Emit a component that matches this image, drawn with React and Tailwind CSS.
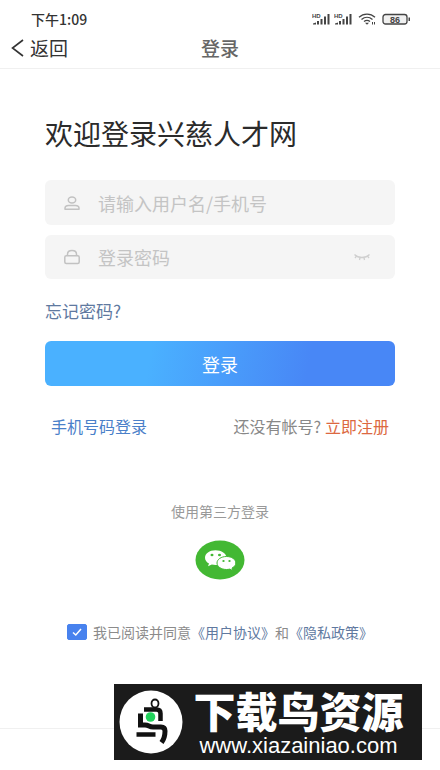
import { useState } from "react";

function Signal() {
  return (
    <svg className="h-3 w-[18px]" viewBox="0 0 18 12" fill="#444">
      <text x="0" y="4.500" fontSize="6" fontWeight="700" fontFamily="Liberation Sans, sans-serif">HD</text>
      <path d="M1 11.500V10.500l3-1v2zM5 8h2v3.500H5zM8.500 6h2v5.500h-2zM12 3.500h2v8h-2zM15.500 1h2v10.500h-2z" />
    </svg>
  );
}

function StatusBar() {
  return (
    <div className="flex h-7 items-end justify-between pl-[31px] pr-[29px] text-[#333]">
      <span className="text-sm leading-[18px] font-medium">下午1:09</span>
      <div className="flex h-[18px] items-center gap-1">
        <Signal />
        <Signal />
        <svg className="ml-0.5 h-3 w-[18px]" viewBox="0 0 18 12" fill="none" stroke="#444" strokeWidth="1.3">
          <path d="M1 4.300C5.500 0 12.500 0 17 4.300M3.500 6.600c3.300-3 7.700-3 11 0M6 8.600c2-1.700 4-1.700 6 0" />
          <path d="M7 9.700h4L9 11.700z" fill="#444" stroke="none" />
          <path d="M14.500 9v2.500M16.500 9v2.500" strokeWidth="1" />
        </svg>
        <svg className="ml-0.5 h-3 w-[29px]" viewBox="0 0 29 12">
          <rect x="1" y="1.500" width="24" height="9.500" rx="2.500" fill="#f0f0f0" stroke="#444" strokeWidth="1.300" />
          <path d="M26.500 4.500h1.500v3.500h-1.500z" fill="#444" />
          <text x="13" y="9.500" textAnchor="middle" fontSize="9" fontWeight="700" fill="#444" fontFamily="Liberation Sans, sans-serif">86</text>
        </svg>
      </div>
    </div>
  );
}

function NavBar() {
  return (
    <header className="grid h-[41px] grid-cols-3 items-center border-b border-[#f0f0f0] px-[11px] text-[#333]">
      <button type="button" className="flex items-center gap-1.5 text-[19px] leading-6">
        <svg className="h-[18px] w-[13px]" viewBox="0 0 13 18" fill="none" stroke="currentColor" strokeWidth="1.600">
          <path d="M12 1 1.500 9 12 17" />
        </svg>
        返回
      </button>
      <h1 className="text-center text-[19px] leading-6 font-medium text-[#666]">登录</h1>
    </header>
  );
}

function UserIcon() {
  return (
    <svg className="h-4 w-4 shrink-0" viewBox="0 0 16 16" fill="none" stroke="#c2c2c2" strokeWidth="1.500">
      <ellipse cx="8" cy="5" rx="3.700" ry="3" />
      <path d="M1 14.200v-1c0-1.700 1.500-2.800 3.500-2.800h7c2 0 3.500 1.100 3.500 2.800v1z" strokeLinejoin="round" />
    </svg>
  );
}

function LockIcon() {
  return (
    <svg className="h-4 w-4 shrink-0" viewBox="0 0 16 16" fill="none" stroke="#c2c2c2" strokeWidth="1.500">
      <rect x="0.800" y="6.800" width="14.400" height="7.700" rx="1.500" />
      <path d="M3.500 6.500V5.300C3.500 3 5.500 1.600 8 1.600s4.500 1.400 4.500 3.700v1.200" />
    </svg>
  );
}

function WechatIcon() {
  return (
    <svg className="h-10 w-[50px]" viewBox="0 0 50 40">
      <ellipse cx="25" cy="20" rx="24.500" ry="19.500" fill="#43b833" />
      <path d="M20.500 10.200c-6 0-10.500 3.300-10.500 7.500 0 2.500 1.500 4.500 4 5.900l-1 2.600 3.800-1.700c1.200.3 2.400.5 3.700.5 6 0 11-3.200 11-7.300s-5-7.500-11-7.500z" fill="#fff" />
      <path d="M31.500 16.500c-5.300 0-9.500 2.900-9.500 6.500s4.200 6.500 9.500 6.500c1.200 0 2.300-.2 3.300-.4l3 1.500-.8-2.500c2.300-1.200 3.800-3 3.800-5.100 0-3.600-4-6.500-9.300-6.500z" fill="#fff" stroke="#43b833" strokeWidth="1" />
      <g fill="#43b833">
        <ellipse cx="17" cy="15" rx="1.500" ry="1.200" />
        <ellipse cx="24.500" cy="15" rx="1.500" ry="1.200" />
        <ellipse cx="28.500" cy="21" rx="1.200" ry="1" />
        <ellipse cx="34.500" cy="21" rx="1.200" ry="1" />
      </g>
    </svg>
  );
}

function SiteBanner() {
  return (
    <div className="absolute right-[18px] bottom-2.5 flex h-[76px] w-[308px] items-center gap-1 bg-[#1b1b1b] pl-[5px] text-white">
      <svg className="h-16 w-16 shrink-0" viewBox="0 0 64 64" fill="none">
        <circle cx="32" cy="32" r="31.500" fill="#fff" />
        <ellipse cx="36" cy="13.500" rx="3.500" ry="4" stroke="#111" strokeWidth="1.800" />
        <path d="M25 19.500h12.500q4 0 4 4V31" stroke="#111" strokeWidth="4.500" />
        <path d="M21.500 23.500V35h4.500q2 0 4 1t4 1h8q4 0 4 4 0 7-3.500 11.500" stroke="#111" strokeWidth="5" />
        <path d="M17.500 44.500h19" stroke="#111" strokeWidth="4.500" />
        <circle cx="31.500" cy="27" r="4.800" fill="#22d35c" />
      </svg>
      <div className="flex flex-1 flex-col items-center pr-3">
        <span className="text-[42px] leading-[48px] font-black whitespace-nowrap">下载鸟资源</span>
        <span className="font-['Liberation_Sans',sans-serif] text-[22px] leading-6">www.xiazainiao.com</span>
      </div>
    </div>
  );
}

export default function App() {
  const [showPassword, setShowPassword] = useState(false);
  const [agreed, setAgreed] = useState(true);

  return (
    <div className="relative flex min-h-screen flex-col bg-white font-['Noto_Sans_CJK_SC',sans-serif]">
      <StatusBar />
      <NavBar />

      <main className="flex flex-1 flex-col px-[45px] pt-11">
        <h2 className="text-[28px] leading-10 whitespace-nowrap text-[#2b2b2b]">欢迎登录兴慈人才网</h2>

        <form className="mt-[27px] flex flex-col" onSubmit={(e) => e.preventDefault()}>
          <div className="flex flex-col gap-2.5">
            <label className="flex h-[45px] items-center gap-[18px] rounded-md bg-[#f5f5f5] px-[19px]">
              <UserIcon />
              <input
                type="text"
                aria-label="用户名"
                placeholder="请输入用户名/手机号"
                className="min-w-0 flex-1 bg-transparent text-lg text-[#333] outline-none placeholder:text-[#c4c4c4]"
              />
            </label>
            <div className="flex h-11 items-center gap-[18px] rounded-md bg-[#f5f5f5] pr-[25px] pl-[19px]">
              <LockIcon />
              <input
                type={showPassword ? "text" : "password"}
                aria-label="登录密码"
                placeholder="登录密码"
                className="min-w-0 flex-1 bg-transparent text-lg text-[#333] outline-none placeholder:text-[#c4c4c4]"
              />
              <button type="button" aria-label="显示密码" onClick={() => setShowPassword(!showPassword)}>
                <svg className="h-2 w-4" viewBox="0 0 16 8" fill="none" stroke="#cfcfcf" strokeWidth="1.300">
                  <path d="M0.500 1.500c4 4 11 4 15 0M2.500 3 1 5M6 4.500 5.500 7M10 4.500l.5 2.500M13.500 3 15 5" />
                </svg>
              </button>
            </div>
          </div>

          <a href="#forgot" className="mt-5 self-start text-[17px] leading-6 text-[#60799f]">忘记密码?</a>

          <button
            type="submit"
            className="mt-[18px] h-[45px] rounded-md bg-[linear-gradient(100deg,#4ab1ff_30%,#4887f6_75%)] text-lg text-white"
          >
            登录
          </button>
        </form>

        <div className="mt-7 flex justify-between px-1.5 text-base leading-6">
          <a href="#phone" className="text-[#4a80c9]">手机号码登录</a>
          <p className="flex gap-1 text-[#888]">
            还没有帐号?
            <a href="#register" className="text-[#dc6841]">立即注册</a>
          </p>
        </div>

        <section className="mt-[63px] flex flex-col items-center gap-[19px]">
          <h3 className="text-sm leading-5 text-[#999]">使用第三方登录</h3>
          <button type="button" aria-label="微信登录">
            <WechatIcon />
          </button>
        </section>

        <div className="mt-10 flex items-center justify-center gap-1.5 text-sm leading-6 whitespace-nowrap text-[#8b8b8b]">
          <span className="relative flex">
            <input
              id="agree"
              type="checkbox"
              checked={agreed}
              onChange={(e) => setAgreed(e.target.checked)}
              className="h-4 w-5 appearance-none rounded-xs border border-[#4882ee] checked:bg-[#4882ee]"
            />
            <svg className="pointer-events-none absolute inset-0 h-4 w-5" viewBox="0 0 20 16" fill="none" stroke="#fff" strokeWidth="1.500">
              <path d="m6 8.500 2.800 2.500L14 5" />
            </svg>
          </span>
          <p>
            <label htmlFor="agree">我已阅读并同意</label>
            <a href="#terms" className="text-[#60799f]">《用户协议》</a>和
            <a href="#privacy" className="text-[#60799f]">《隐私政策》</a>
          </p>
        </div>
      </main>

      <footer className="h-[42px] border-t border-[#f0f0f0]" />
      <SiteBanner />
    </div>
  );
}
